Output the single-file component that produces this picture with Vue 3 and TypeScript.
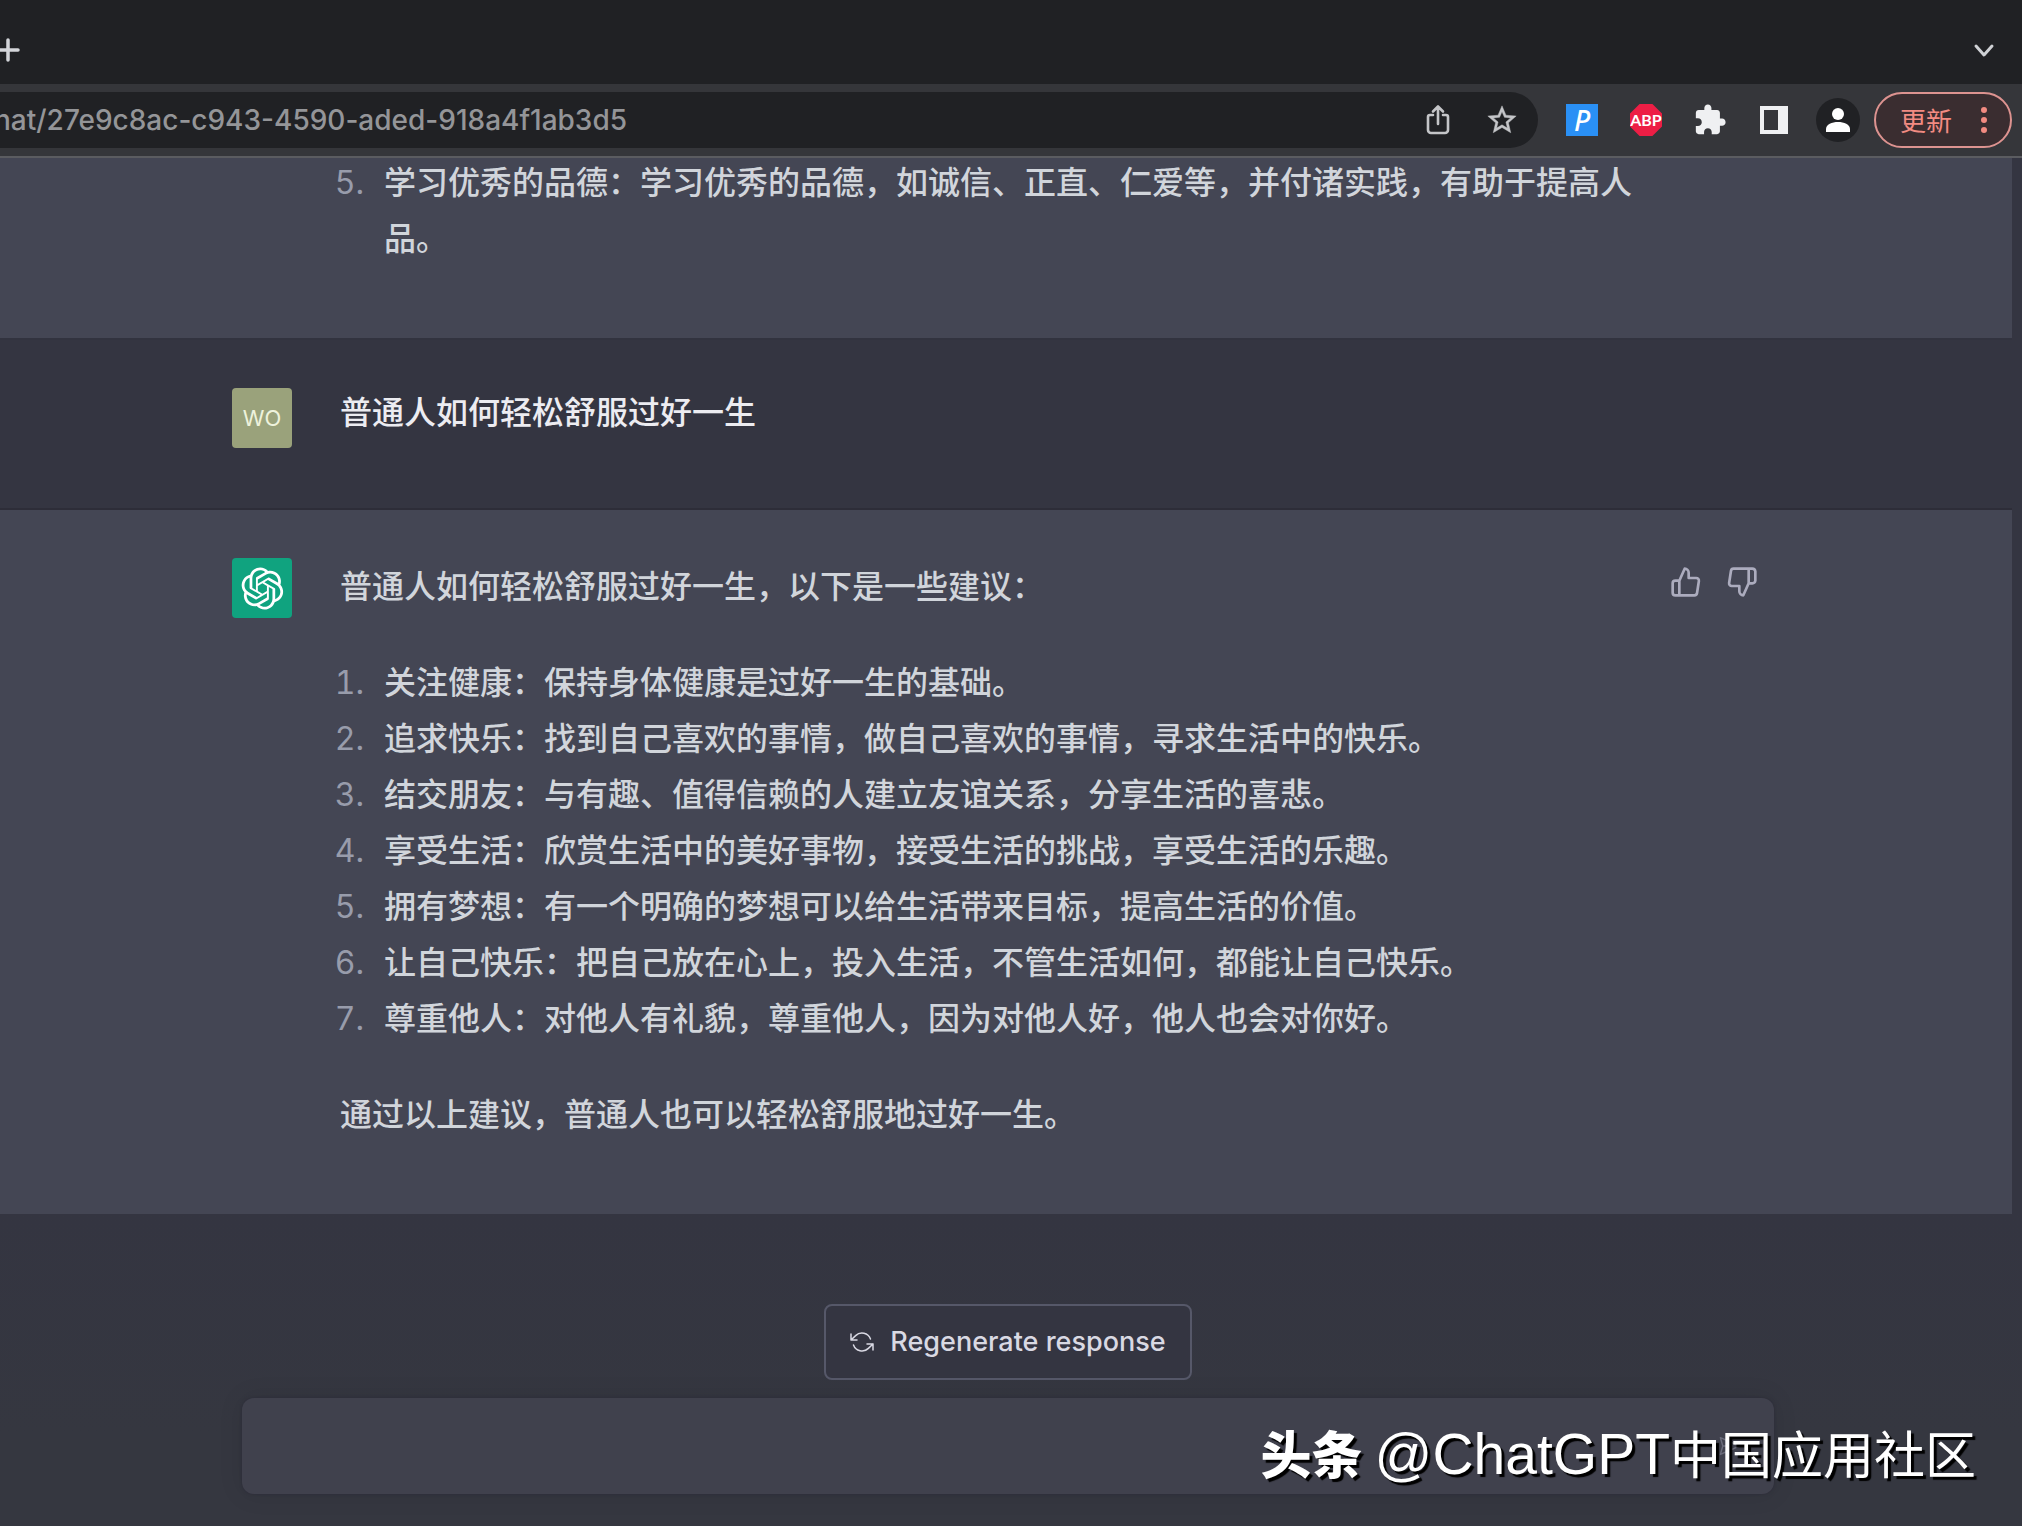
<script setup lang="ts">
import { ref } from 'vue'

const url = ref('hat/27e9c8ac-c943-4590-aded-918a4f1ab3d5')
const draft = ref('')
const question = '普通人如何轻松舒服过好一生'
const previous = '学习优秀的品德：学习优秀的品德，如诚信、正直、仁爱等，并付诸实践，有助于提高人品。'
const intro = '普通人如何轻松舒服过好一生，以下是一些建议：'
const tips: string[] = [
  '关注健康：保持身体健康是过好一生的基础。',
  '追求快乐：找到自己喜欢的事情，做自己喜欢的事情，寻求生活中的快乐。',
  '结交朋友：与有趣、值得信赖的人建立友谊关系，分享生活的喜悲。',
  '享受生活：欣赏生活中的美好事物，接受生活的挑战，享受生活的乐趣。',
  '拥有梦想：有一个明确的梦想可以给生活带来目标，提高生活的价值。',
  '让自己快乐：把自己放在心上，投入生活，不管生活如何，都能让自己快乐。',
  '尊重他人：对他人有礼貌，尊重他人，因为对他人好，他人也会对你好。',
]
const outro = '通过以上建议，普通人也可以轻松舒服地过好一生。'
</script>

<template>
  <div class="window">
    <header class="tabs">
      <button class="plain" aria-label="New tab">
        <svg width="24" height="24" viewBox="0 0 24 24" fill="none" stroke="#d3d5d9" stroke-width="3.5" stroke-linecap="round"><path d="M12 2v20M2 12h20" /></svg>
      </button>
      <button class="plain" aria-label="Search tabs">
        <svg width="24" height="24" viewBox="0 0 24 24" fill="none" stroke="#cfd1d5" stroke-width="3" stroke-linecap="round" stroke-linejoin="round"><path d="M4 8l8 9 8-9" /></svg>
      </button>
    </header>

    <nav class="toolbar">
      <div class="omnibox">
        <input v-model="url" class="url" aria-label="Address" />
        <button class="plain slot" aria-label="Share">
          <svg width="28" height="32" viewBox="0 0 28 32" fill="none" stroke="#c4c5c8" stroke-width="2.6" stroke-linecap="round" stroke-linejoin="round"><path d="M9 11H6a2 2 0 0 0-2 2v13a3 3 0 0 0 3 3h14a3 3 0 0 0 3-3V13a2 2 0 0 0-2-2h-3M14 20V3M9 7.500l5-5 5 5" /></svg>
        </button>
        <button class="plain slot" aria-label="Bookmark">
          <svg width="34" height="34" viewBox="0 0 24 24" fill="#c4c5c8" stroke="#c4c5c8" stroke-width="0.3"><path d="M22 9.240l-7.190-.62L12 2 9.190 8.630 2 9.240l5.460 4.730L5.820 21 12 17.270 18.180 21l-1.630-7.030L22 9.240zM12 15.400l-3.760 2.270 1-4.280-3.320-2.880 4.380-.38L12 6.100l1.710 4.040 4.380.38-3.320 2.880 1 4.280L12 15.400z" /></svg>
        </button>
      </div>
      <button class="plain slot" aria-label="P extension"><span class="ext-p">P</span></button>
      <button class="plain slot" aria-label="Adblock Plus"><span class="ext-abp">ABP</span></button>
      <button class="plain slot" aria-label="Extensions">
        <svg width="34" height="34" viewBox="0 0 24 24" fill="#eff0f2"><path d="M20.5 11H19V7c0-1.100-.9-2-2-2h-4V3.500C13 2.120 11.880 1 10.500 1S8 2.120 8 3.500V5H4c-1.100 0-1.990.9-1.990 2v3.800H3.500c1.490 0 2.700 1.210 2.700 2.700s-1.210 2.700-2.700 2.700H2V20c0 1.100.9 2 2 2h3.800v-1.500c0-1.490 1.210-2.700 2.700-2.700 1.490 0 2.700 1.210 2.700 2.700V22H17c1.100 0 2-.9 2-2v-4h1.500c1.380 0 2.500-1.120 2.500-2.500S21.880 11 20.500 11z" /></svg>
      </button>
      <button class="plain slot" aria-label="Side panel">
        <svg width="28" height="28" viewBox="0 0 28 28"><path fill="#eff0f2" fill-rule="evenodd" d="M0 0h28v28H0zM4 4v20h14V4z" /></svg>
      </button>
      <button class="plain slot" aria-label="Profile">
        <svg width="44" height="44" viewBox="0 0 44 44"><circle cx="22" cy="22" r="22" fill="#202124" /><circle cx="22" cy="16" r="6" fill="#fff" /><path fill="#fff" d="M10 34v-3c0-4.500 6-7 12-7s12 2.500 12 7v3z" /></svg>
      </button>
      <button class="update">
        <span>更新</span>
        <svg width="6" height="26" viewBox="0 0 6 26" fill="#f28b82"><circle cx="3" cy="3" r="3" /><circle cx="3" cy="13" r="3" /><circle cx="3" cy="23" r="3" /></svg>
      </button>
    </nav>

    <main class="page">
      <section class="row bot clipped">
        <div class="column">
          <div class="indent"></div>
          <div class="body">
            <ol class="from-five"><li>{{ previous }}</li></ol>
          </div>
          <div class="actions"></div>
        </div>
      </section>

      <section class="row user">
        <div class="column">
          <div class="avatar wo">WO</div>
          <div class="body"><p>{{ question }}</p></div>
          <div class="actions"></div>
        </div>
      </section>

      <section class="row bot answer">
        <div class="column">
          <div class="avatar gpt">
            <svg width="43" height="43" viewBox="0 0 41 41" fill="#fff"><path d="M37.5324 16.8707C37.9808 15.5241 38.1363 14.0974 37.9886 12.6859C37.8409 11.2744 37.3934 9.91076 36.676 8.68622C35.6126 6.83404 33.9882 5.3676 32.0373 4.4985C30.0864 3.62941 27.9098 3.40259 25.8215 3.85078C24.8796 2.7893 23.7219 1.94125 22.4257 1.36341C21.1295 0.785575 19.7249 0.491269 18.3058 0.500197C16.1708 0.495044 14.0893 1.16803 12.3614 2.42214C10.6335 3.67624 9.34853 5.44666 8.6917 7.47815C7.30085 7.76286 5.98686 8.3414 4.8377 9.17505C3.68854 10.0087 2.73073 11.0782 2.02839 12.312C0.956464 14.1591 0.498905 16.2988 0.721698 18.4228C0.944492 20.5467 1.83612 22.5449 3.268 24.1293C2.81966 25.4759 2.66413 26.9026 2.81182 28.3141C2.95951 29.7256 3.40701 31.0892 4.12437 32.3138C5.18791 34.1659 6.8123 35.6322 8.76321 36.5013C10.7141 37.3704 12.8907 37.5973 14.9789 37.1492C15.9208 38.2107 17.0786 39.0587 18.3747 39.6366C19.6709 40.2144 21.0755 40.5087 22.4946 40.4998C24.6307 40.5054 26.7133 39.8321 28.4418 38.5772C30.1704 37.3223 31.4556 35.5506 32.1119 33.5179C33.5027 33.2332 34.8167 32.6547 35.9659 31.821C37.115 30.9874 38.0728 29.9178 38.7752 28.684C39.8458 26.8371 40.3023 24.6979 40.0789 22.5748C39.8556 20.4517 38.9639 18.4544 37.5324 16.8707ZM22.4978 37.8849C20.7443 37.8874 19.0459 37.2733 17.6994 36.1501C17.7601 36.117 17.8666 36.0586 17.936 36.0161L25.9004 31.4156C26.1003 31.3019 26.2663 31.137 26.3813 30.9378C26.4964 30.7386 26.5563 30.5124 26.5549 30.2825V19.0542L29.9213 20.998C29.9389 21.0068 29.9541 21.0198 29.9656 21.0359C29.977 21.052 29.9842 21.0707 29.9867 21.0902V30.3889C29.9842 32.375 29.1946 34.2791 27.7909 35.6841C26.3872 37.0892 24.4838 37.8806 22.4978 37.8849ZM6.39227 31.0064C5.51397 29.4888 5.19742 27.7107 5.49804 25.9832C5.55718 26.0187 5.66048 26.0818 5.73461 26.1244L13.699 30.7248C13.8975 30.8408 14.1233 30.902 14.3532 30.902C14.583 30.902 14.8088 30.8408 15.0073 30.7248L24.731 25.1103V28.9979C24.7321 29.0177 24.7283 29.0376 24.7199 29.0556C24.7115 29.0736 24.6988 29.0893 24.6829 29.1012L16.6317 33.7497C14.9096 34.7416 12.8643 35.0097 10.9447 34.4954C9.02506 33.9811 7.38785 32.7263 6.39227 31.0064ZM4.29707 13.6194C5.17156 12.0998 6.55279 10.9364 8.19885 10.3327C8.19885 10.4013 8.19491 10.5228 8.19491 10.6071V19.808C8.19351 20.0378 8.25334 20.2638 8.36823 20.4629C8.48312 20.6619 8.64893 20.8267 8.84863 20.9404L18.5723 26.5542L15.206 28.4979C15.1894 28.5089 15.1703 28.5155 15.1505 28.5173C15.1307 28.5191 15.1107 28.516 15.0924 28.5082L7.04046 23.8557C5.32135 22.8601 4.06716 21.2235 3.55289 19.3046C3.03862 17.3858 3.30624 15.3413 4.29707 13.6194ZM31.955 20.0556L22.2312 14.4411L25.5976 12.4981C25.6142 12.4872 25.6333 12.4805 25.6531 12.4787C25.6729 12.4769 25.6928 12.4801 25.7111 12.4879L33.7631 17.1364C34.9967 17.849 36.0017 18.8982 36.6606 20.1613C37.3194 21.4244 37.6047 22.849 37.4832 24.2684C37.3617 25.6878 36.8382 27.0432 35.9743 28.1759C35.1103 29.3086 33.9415 30.1717 32.6047 30.6641C32.6047 30.5947 32.6047 30.4733 32.6047 30.3889V21.188C32.6066 20.9586 32.5474 20.7328 32.4332 20.5338C32.319 20.3348 32.154 20.1698 31.955 20.0556ZM35.3055 15.0128C35.2464 14.9765 35.1431 14.9142 35.069 14.8717L27.1045 10.2712C26.906 10.1554 26.6803 10.0943 26.4504 10.0943C26.2206 10.0943 25.9948 10.1554 25.7963 10.2712L16.0726 15.8858V11.9982C16.0715 11.9783 16.0753 11.9585 16.0837 11.9405C16.0921 11.9225 16.1048 11.9068 16.1207 11.8949L24.1719 7.25025C25.4053 6.53903 26.8158 6.19376 28.2383 6.25482C29.6608 6.31589 31.0364 6.78077 32.2044 7.59508C33.3723 8.40939 34.2842 9.53945 34.8334 10.8531C35.3826 12.1667 35.5464 13.6095 35.3055 15.0128ZM14.2424 21.9419L10.8752 19.9981C10.8576 19.9893 10.8423 19.9763 10.8309 19.9602C10.8195 19.9441 10.8122 19.9254 10.8098 19.9058V10.6071C10.8107 9.18295 11.2173 7.78848 11.9819 6.58696C12.7466 5.38544 13.8377 4.42659 15.1275 3.82264C16.4173 3.21869 17.8524 2.99464 19.2649 3.1767C20.6775 3.35876 22.0089 3.93941 23.1034 4.85067C23.0427 4.88379 22.937 4.94215 22.8668 4.98473L14.9024 9.58517C14.7025 9.69878 14.5366 9.86356 14.4215 10.0626C14.3065 10.2616 14.2466 10.4877 14.2479 10.7175L14.2424 21.9419ZM16.071 17.9991L20.4018 15.4978L24.7325 17.9975V22.9985L20.4018 25.4983L16.071 22.9985V17.9991Z" /></svg>
          </div>
          <div class="body">
            <p>{{ intro }}</p>
            <ol><li v-for="tip in tips" :key="tip">{{ tip }}</li></ol>
            <p>{{ outro }}</p>
          </div>
          <div class="actions">
            <button class="plain" aria-label="Good response">
              <svg width="32" height="32" viewBox="0 0 24 24" fill="none" stroke="#acacbe" stroke-width="2" stroke-linecap="round" stroke-linejoin="round"><path d="M14 9V5a3 3 0 0 0-3-3l-4 9v11h11.280a2 2 0 0 0 2-1.700l1.380-9a2 2 0 0 0-2-2.300zM7 22H4a2 2 0 0 1-2-2v-7a2 2 0 0 1 2-2h3" /></svg>
            </button>
            <button class="plain" aria-label="Bad response">
              <svg width="32" height="32" viewBox="0 0 24 24" fill="none" stroke="#acacbe" stroke-width="2" stroke-linecap="round" stroke-linejoin="round"><path d="M10 15v4a3 3 0 0 0 3 3l4-9V2H5.720a2 2 0 0 0-2 1.700l-1.380 9a2 2 0 0 0 2 2.300zm7-13h2.670A2.310 2.310 0 0 1 22 4v7a2.310 2.310 0 0 1-2.330 2H17" /></svg>
            </button>
          </div>
        </div>
      </section>
    </main>

    <footer class="composer">
      <button class="regenerate">
        <svg width="24" height="24" viewBox="0 0 24 24" fill="none" stroke="#d9d9e3" stroke-width="1.5" stroke-linecap="round" stroke-linejoin="round"><path d="M1 4v6h6M23 20v-6h-6M20.490 9A9 9 0 0 0 5.640 5.640L1 10m22 4l-4.640 4.360A9 9 0 0 1 3.510 15" /></svg>
        <span>Regenerate response</span>
      </button>
      <div class="prompt">
        <textarea v-model="draft" rows="1" aria-label="Message"></textarea>
        <button class="plain" aria-label="Send">
          <svg width="24" height="24" viewBox="0 0 20 20" fill="none" stroke="#6b6c7b" stroke-width="1.2" stroke-linejoin="round"><path d="M10 2l7 16-7-2-7 2 7-16zM10 16v-5" transform="rotate(90 10 10)" /></svg>
        </button>
      </div>
      <div class="watermark"><b>头条</b><span class="handle">@ChatGPT</span><span>中国应用社区</span></div>
    </footer>
  </div>
</template>

<style>
body {
  margin: 0;
  background: #343541;
}
</style>

<style scoped>
* {
  box-sizing: border-box;
}
.window {
  min-height: 100vh;
  display: flex;
  flex-direction: column;
  font-family: Inter, "Noto Sans CJK SC", sans-serif;
  overflow: hidden;
}
.plain {
  display: flex;
  align-items: center;
  justify-content: center;
  padding: 0;
  border: 0;
  background: none;
}
.tabs {
  height: 84px;
  padding: 16px 26px 0 0;
  display: flex;
  align-items: center;
  justify-content: space-between;
  background: #202124;
}
.tabs .plain:first-child {
  margin-left: -4px;
}
.toolbar {
  height: 74px;
  padding-right: 10px;
  display: flex;
  align-items: center;
  background: #35363a;
  border-bottom: 2px solid #5b5c60;
}
.omnibox {
  flex: 1;
  height: 56px;
  margin-right: 12px;
  padding-right: 4px;
  display: flex;
  align-items: center;
  background: #202124;
  border-radius: 0 28px 28px 0;
}
.url {
  flex: 1;
  min-width: 0;
  height: 40px;
  margin-left: -6px;
  padding: 0;
  border: 0;
  outline: 0;
  background: none;
  color: #949598;
  font: 500 28px/40px Inter, sans-serif;
}
.slot {
  width: 64px;
  height: 56px;
}
.ext-p {
  width: 32px;
  height: 32px;
  background: #2a90f5;
  color: #fff;
  font: italic 500 28px/32px "Noto Sans", sans-serif;
}
.ext-abp {
  width: 32px;
  height: 32px;
  background: #ed1e45;
  clip-path: polygon(30% 0, 70% 0, 100% 30%, 100% 70%, 70% 100%, 30% 100%, 0 70%, 0 30%);
  color: #fff;
  font: bold 16px/32px Lato, sans-serif;
}
.update {
  width: 138px;
  height: 56px;
  margin-left: 4px;
  padding: 0 23px 0 24px;
  display: flex;
  align-items: center;
  justify-content: space-between;
  border: 2px solid #dd9390;
  border-radius: 28px;
  background: #3a2d30;
  color: #f28b82;
  font: 26px/40px "Noto Sans CJK SC", sans-serif;
}
.page {
  padding-right: 10px;
  background: #343541;
}
.row {
  padding: 48px 0;
  border-bottom: 2px solid #2d2d38;
  font: 500 32px/56px "Noto Sans CJK SC", sans-serif;
}
.bot {
  background: #444654;
  color: #d1d5db;
}
.user {
  color: #ececf1;
  line-height: 48px;
}
.column {
  max-width: 1548px;
  margin: 0 auto;
  padding-right: 22px;
  display: flex;
}
.clipped {
  padding: 0 0 74px;
  border-bottom-color: #32333f;
  overflow: hidden;
}
.clipped .column {
  margin-top: -4px;
}
.user .column {
  min-height: 72px;
}
.answer {
  padding-bottom: 72px;
  border-bottom-color: #444654;
}
.indent,
.avatar {
  flex: none;
  width: 60px;
  margin-right: 48px;
}
.avatar {
  height: 60px;
  display: flex;
  align-items: center;
  justify-content: center;
  border-radius: 4px;
}
.wo {
  background: #9aa27b;
  color: #eef2dc;
  font-family: Inter, sans-serif;
  font-size: 22px;
  font-weight: 400;
}
.gpt {
  background: #10a37f;
}
.body {
  flex: 1;
  min-width: 0;
  margin-top: -2px;
}
p,
ol {
  margin: 0;
}
ol {
  margin-left: -8px;
  padding: 0;
  list-style: none;
  counter-reset: item;
}
.from-five {
  counter-reset: item 4;
}
li {
  display: flex;
  align-items: baseline;
  counter-increment: item;
}
li::before {
  content: counter(item) ".";
  flex: none;
  width: 32px;
  margin-right: 20px;
  text-align: right;
  color: #989cab;
  font-family: Inter, sans-serif;
  font-weight: 400;
  line-height: 40px;
  font-variant-numeric: tabular-nums;
}
p + ol,
ol + p {
  margin-top: 40px;
}
.actions {
  flex: none;
  width: 88px;
  margin-left: 20px;
  display: flex;
  align-items: flex-start;
  justify-content: space-between;
}
.actions .plain {
  height: 48px;
}
.composer {
  position: relative;
  flex: 1;
  padding: 90px 248px 32px 242px;
  display: flex;
  flex-direction: column;
  align-items: center;
  background: linear-gradient(#343541, #353740 70%);
}
.regenerate {
  height: 76px;
  margin-bottom: 18px;
  padding: 0 24px;
  display: flex;
  align-items: center;
  gap: 16px;
  border: 2px solid #565869;
  border-radius: 8px;
  background: #343541;
  color: #d9d9e3;
  font: 500 27px/40px Inter, sans-serif;
}
.prompt {
  width: 100%;
  height: 96px;
  padding: 0 32px 0 32px;
  display: flex;
  align-items: center;
  border-radius: 12px;
  background: #40414d;
  box-shadow: 0 0 2px 1px #2f303b, 0 0 24px rgba(0, 0, 0, 0.1);
}
textarea {
  flex: 1;
  height: 48px;
  padding: 0;
  border: 0;
  outline: 0;
  resize: none;
  background: none;
  color: #fff;
  font: 32px/48px Inter, sans-serif;
}
.watermark {
  position: absolute;
  right: 46px;
  bottom: 36px;
  display: flex;
  align-items: baseline;
  color: #fff;
  font: 51px/72px "Noto Sans CJK SC", sans-serif;
  text-shadow: 3px 3px 1px #000;
  white-space: nowrap;
}
.watermark b {
  margin-right: 12px;
  font-weight: 900;
}
.handle {
  font-family: "Liberation Sans", sans-serif;
  font-size: 57px;
}
</style>
